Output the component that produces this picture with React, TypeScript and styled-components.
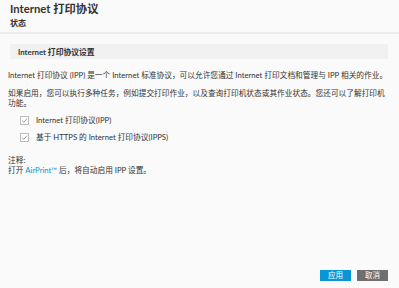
import React from "react";
import styled, { createGlobalStyle } from "styled-components";

const GlobalStyle = createGlobalStyle`
  html, body {
    margin: 0;
    padding: 0;
    background: #fafafa;
  }
  body {
    font-family: Lato, "Noto Sans CJK SC", sans-serif;
    color: #333;
  }
`;

const Page = styled.div`
  width: 399px;
  height: 288px;
  display: flex;
  flex-direction: column;
  background: #fafafa;
  overflow: hidden;
`;

const Header = styled.header`
  padding: 1px 10px 3px;
  border-bottom: 2px solid #ececec;
`;

const Title = styled.h1`
  margin: 0;
  font-size: 11.3px;
  line-height: 16px;
  font-weight: 700;
  color: #333;
`;

const Subtitle = styled.h2`
  margin: 0;
  font-size: 8px;
  line-height: 12px;
  font-weight: 700;
  color: #333;
`;

const Body = styled.main`
  flex: 1;
  padding: 10px 10px 0 8px;
  display: flex;
  flex-direction: column;
`;

const SectionHead = styled.div`
  margin-left: 2px;
  margin-right: 1px;
  background: #f1f1f1;
  height: 15px;
  display: flex;
  align-items: center;
  padding-left: 8px;
  font-size: 7.8px;
  font-weight: 700;
  color: #333;
`;

const P = styled.p<{ $top: number }>`
  margin: 0;
  font-size: 7.7px;
  line-height: 10px;
  color: #333;
  margin-top: ${(p) => p.$top}px;
`;

const Options = styled.div`
  margin-top: 7px;
  padding-left: 12px;
  display: flex;
  flex-direction: column;
  gap: 7px;
`;

const Option = styled.label`
  display: flex;
  align-items: center;
  gap: 7px;
  font-size: 7.7px;
  line-height: 10px;
  color: #333;
`;

const Box = styled.span`
  width: 7px;
  height: 7px;
  border: 1px solid #bdbdbd;
  background: #fff;
  display: flex;
  align-items: center;
  justify-content: center;
`;

const Link = styled.span`
  color: #0096d6;
`;

const Footer = styled.footer`
  display: flex;
  justify-content: flex-end;
  gap: 6px;
  padding: 0 11px 7px 0;
`;

const Button = styled.button<{ $primary?: boolean }>`
  width: 31px;
  height: 11px;
  border: none;
  padding: 0;
  font-family: inherit;
  font-size: 7.5px;
  line-height: 11px;
  color: #fff;
  background: ${(p) => (p.$primary ? "#0a96d5" : "#6f6f6f")};
`;

const Check = () => (
  <Box>
    <svg width="7" height="7" viewBox="0 0 7 7">
      <path d="M1 3.6 L2.8 5.3 L6 1.6" fill="none" stroke="#8a8a8a" strokeWidth="0.9" />
    </svg>
  </Box>
);

export default function App() {
  return (
    <Page>
      <GlobalStyle />
      <Header>
        <Title>Internet 打印协议</Title>
        <Subtitle>状态</Subtitle>
      </Header>
      <Body>
        <SectionHead>Internet 打印协议设置</SectionHead>
        <P $top={11}>
          Internet 打印协议 (IPP) 是一个 Internet 标准协议，可以允许您通过 Internet 打印文档和管理与 IPP 相关的作业。
        </P>
        <P $top={8}>
          如果启用，您可以执行多种任务，例如提交打印作业，以及查询打印机状态或其作业状态。您还可以了解打印机功能。
        </P>
        <Options>
          <Option>
            <Check />
            Internet 打印协议(IPP)
          </Option>
          <Option>
            <Check />
            基于 HTTPS 的 Internet 打印协议(IPPS)
          </Option>
        </Options>
        <P $top={13}>注释:</P>
        <P $top={0}>
          打开 <Link>AirPrint™</Link> 后，将自动启用 IPP 设置。
        </P>
      </Body>
      <Footer>
        <Button $primary>应用</Button>
        <Button>取消</Button>
      </Footer>
    </Page>
  );
}
